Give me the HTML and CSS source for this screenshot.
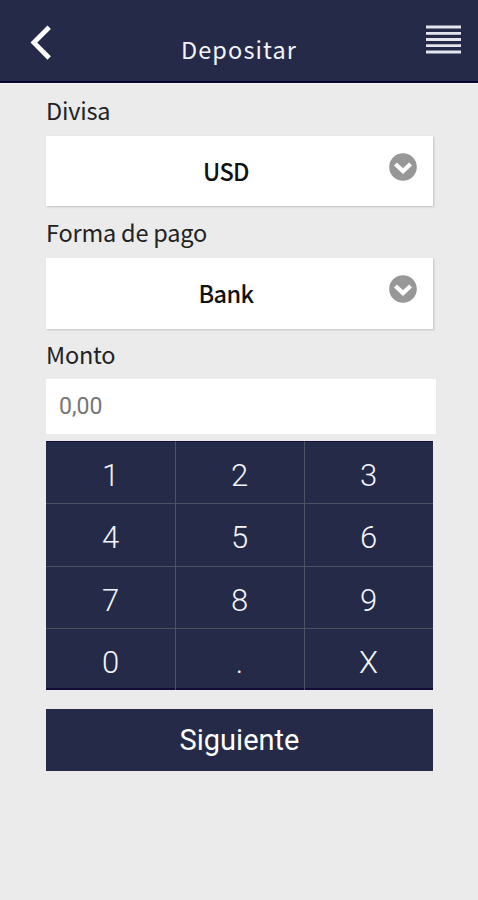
FILE: index.html
```html
<!DOCTYPE html>
<html lang="es">
<head>
  <meta charset="utf-8">
  <title>Depositar</title>
  <link rel="stylesheet" href="styles.css">
</head>
<body>
  <header class="header">
    <a class="back">
      <svg width="22" height="36" viewBox="0 0 22 36">
        <path d="M19.2 2.3 L3.9 17.6 L19.2 33" fill="none" stroke="#fff" stroke-width="4.8"/>
      </svg>
    </a>
    <h1>Depositar</h1>
    <svg class="menu" width="35" height="30" viewBox="0 0 35 30">
      <path d="M0 2 H35 M0 8.3 H35 M0 14.5 H35 M0 20.7 H35 M0 27 H35" fill="none" stroke="#e4e5ed" stroke-width="2.8"/>
    </svg>
  </header>

  <form class="deposit">
    <label>Divisa</label>
    <div class="select">
      <span class="value">USD</span>
      <svg class="arrow" width="28" height="28" viewBox="0 0 28 28">
        <circle cx="14" cy="14" r="13.8" fill="#979797"/>
        <path d="M6.4 10.9 L14 18.1 L21.6 10.9" fill="none" stroke="#fff" stroke-width="4.2"/>
      </svg>
    </div>

    <label>Forma de pago</label>
    <div class="select payment">
      <span class="value">Bank</span>
      <svg class="arrow" width="28" height="28" viewBox="0 0 28 28">
        <circle cx="14" cy="14" r="13.8" fill="#979797"/>
        <path d="M6.4 10.9 L14 18.1 L21.6 10.9" fill="none" stroke="#fff" stroke-width="4.2"/>
      </svg>
    </div>

    <label for="amount" class="amount-label">Monto</label>
    <input type="text" id="amount" placeholder="0,00">

    <div class="keypad">
      <button type="button">1</button>
      <button type="button">2</button>
      <button type="button">3</button>
      <button type="button">4</button>
      <button type="button">5</button>
      <button type="button">6</button>
      <button type="button">7</button>
      <button type="button">8</button>
      <button type="button">9</button>
      <button type="button">0</button>
      <button type="button">.</button>
      <button type="button">X</button>
    </div>

    <button type="button" class="next">Siguiente</button>
  </form>
</body>
</html>
```
FILE: styles.css
```css
* {
  box-sizing: border-box;
}

body {
  margin: 0;
  min-height: 100vh;
  background-color: #ebebeb;
  font-family: "Noto Sans CJK SC", "Noto Sans", sans-serif;
  color: #222;
}

.header {
  display: grid;
  grid-template-columns: 100px 1fr 100px;
  height: 83px;
  background-color: #242a47;
  border-bottom: 2px solid #080631;
  box-shadow: 0 1px 1px #f6f5ff;
}

.back {
  padding: 25px 0 0 30px;
}

.back svg {
  display: block;
}

h1 {
  margin: 0;
  padding-top: 34px;
  font-size: 23.5px;
  font-weight: 400;
  line-height: 30px;
  letter-spacing: 1.1px;
  text-align: center;
  color: #f4f5fb;
}

.menu {
  margin: 25px 0 0 48px;
}

.deposit {
  width: 387px;
  margin-left: 46px;
}

label {
  display: block;
  height: 53px;
  padding-top: 12px;
  font-size: 23.5px;
  line-height: 30px;
  letter-spacing: -0.2px;
}

.select {
  display: flex;
  height: 70px;
  padding: 0 16px 0 17px;
  background-color: #fff;
  box-shadow: 1px 1px 2px rgba(0, 0, 0, 0.18);
}

.select.payment {
  height: 71px;
}

.select + label {
  height: 52px;
  padding-top: 11px;
}

.value {
  flex: 1;
  padding-top: 20px;
  font-size: 23.5px;
  font-weight: 500;
  line-height: 30px;
  letter-spacing: -0.6px;
  text-align: center;
  color: #111;
}

.arrow {
  margin-top: 17px;
}

.select + .amount-label {
  height: 50px;
  padding-top: 10px;
}

input {
  display: block;
  width: 390px;
  height: 55px;
  padding: 0 13px 1px;
  border: none;
  background-color: #fff;
  font-family: Roboto, sans-serif;
  font-size: 23px;
}

input::placeholder {
  color: #777;
}

.keypad {
  display: grid;
  grid-template-columns: repeat(3, 1fr);
  grid-template-rows: repeat(4, 1fr);
  height: 249px;
  margin-top: 7px;
  background-color: #242a47;
  box-shadow: inset 0 -2px #140b38;
}

.keypad button {
  padding: 6px 1px 0 0;
  border: none;
  border-left: 1px solid #4b5264;
  border-top: 1px solid #4b5264;
  background: none;
  font-family: Roboto, sans-serif;
  font-size: 31px;
  font-weight: 300;
  color: #f4f5fb;
}

.keypad button:nth-child(3n+1) {
  padding-right: 0;
  border-left: none;
}

.keypad button:nth-child(-n+3) {
  border-top-color: #140b38;
}

.next {
  display: block;
  width: 387px;
  height: 62px;
  margin-top: 19px;
  padding: 0;
  border: none;
  background-color: #242a47;
  font-family: Roboto, sans-serif;
  font-size: 29px;
  color: #fff;
}
```
